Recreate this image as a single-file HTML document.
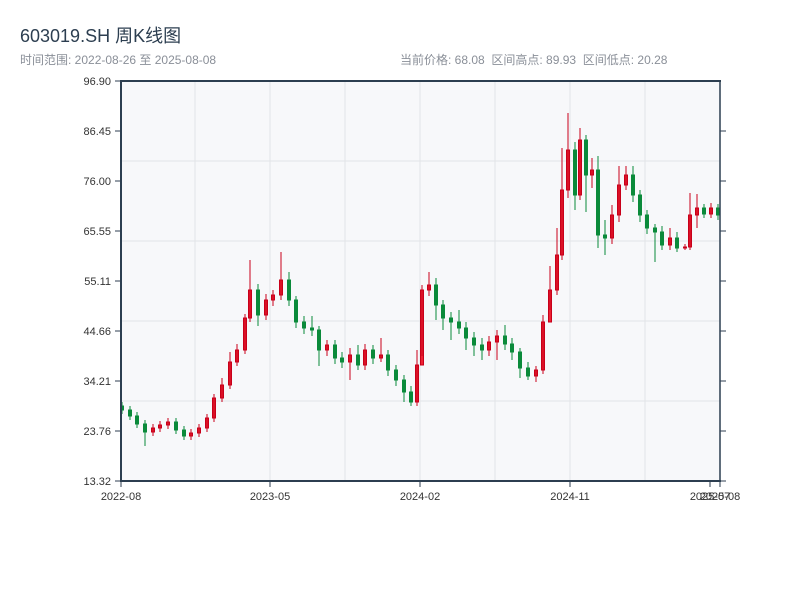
<!DOCTYPE html>
<html><head><meta charset="utf-8"><style>
body{margin:0;background:#fff;width:800px;height:600px;overflow:hidden;font-family:"Liberation Sans","Noto Sans CJK SC",sans-serif}
.t{position:absolute;left:20px;top:22px;font-size:18px;color:#2c3e50}
.s{position:absolute;top:51px;font-size:12px;color:#8a8f98}
svg{position:absolute;left:0;top:0}
.r{stroke:#c8001a;fill:#ee2233;stroke-width:1}
.g{stroke:#0a8a3a;fill:#0a8a3a;stroke-width:1}
.gr{stroke:#e2e4e8;stroke-width:1}
.ax{stroke:#2c3e50}
text{fill:#333;font-size:11px;font-family:"Liberation Sans",sans-serif}
</style></head><body>
<div class="t">603019.SH 周K线图</div>
<div class="s" style="left:20px">时间范围: 2022-08-26 至 2025-08-08</div>
<div class="s" style="left:400px">当前价格: 68.08 &nbsp;区间高点: 89.93 &nbsp;区间低点: 20.28</div>
<svg width="800" height="600">
<rect x="121" y="81" width="599" height="400" fill="#f7f8fa"/>
<path class="gr" d="M121 161H720M121 241H720M121 321H720M121 401H720M195 81V481M270 81V481M345 81V481M420 81V481M495 81V481M570 81V481M645 81V481"/>
<path class="ax" d="M115 81H121M115 131H121M115 181H121M115 231H121M115 281H121M115 331H121M115 381H121M115 431H121M115 481H121M720 131H726M720 181H726M720 231H726M720 281H726M720 331H726M720 381H726M720 431H726M720 481H726M121 481V487M270 481V487M420 481V487M570 481V487M710 481V487M720 481V487"/>
<g text-anchor="end">
<text x="111" y="85">96.90</text><text x="111" y="135">86.45</text><text x="111" y="185">76.00</text><text x="111" y="235">65.55</text><text x="111" y="285">55.11</text><text x="111" y="335">44.66</text><text x="111" y="385">34.21</text><text x="111" y="435">23.76</text><text x="111" y="485">13.32</text>
</g>
<g text-anchor="middle">
<text x="121" y="500">2022-08</text><text x="270" y="500">2023-05</text><text x="420" y="500">2024-02</text><text x="570" y="500">2024-11</text><text x="710" y="500">2025-07</text><text x="720" y="500">2025-08</text>
</g>
<path class="g" d="M122 402V414M120.5 406h3V410h-3z"/>
<path class="g" d="M130 406V420M128.5 410h3V416h-3z"/>
<path class="g" d="M137 412V428M135.5 416h3V424h-3z"/>
<path class="g" d="M145 420V446M143.5 424h3V432h-3z"/>
<path class="r" d="M153 424V436M151.5 428h3V432h-3z"/>
<path class="r" d="M160 421V432M158.5 425h3V428h-3z"/>
<path class="r" d="M168 418V429M166.5 422h3V425h-3z"/>
<path class="g" d="M176 418V434M174.5 422h3V430h-3z"/>
<path class="g" d="M184 426V440M182.5 430h3V436h-3z"/>
<path class="r" d="M191 429V440M189.5 433h3V436h-3z"/>
<path class="r" d="M199 424V437M197.5 428h3V433h-3z"/>
<path class="r" d="M207 414V432M205.5 418h3V428h-3z"/>
<path class="r" d="M214 394V422M212.5 398h3V418h-3z"/>
<path class="r" d="M222 378V402M220.5 385h3V398h-3z"/>
<path class="r" d="M230 352V389M228.5 362h3V385h-3z"/>
<path class="r" d="M237 344V366M235.5 350h3V362h-3z"/>
<path class="r" d="M245 314V354M243.5 318h3V350h-3z"/>
<path class="r" d="M250 260V322M248.5 290h3V318h-3z"/>
<path class="g" d="M258 284V326M256.5 290h3V315h-3z"/>
<path class="r" d="M266 294V320M264.5 300h3V315h-3z"/>
<path class="r" d="M273 290V306M271.5 295h3V300h-3z"/>
<path class="r" d="M281 252V300M279.5 280h3V295h-3z"/>
<path class="g" d="M289 272V306M287.5 280h3V300h-3z"/>
<path class="g" d="M296 296V328M294.5 300h3V322h-3z"/>
<path class="g" d="M304 316V334M302.5 322h3V328h-3z"/>
<path class="g" d="M312 316V336M310.5 328h3V330h-3z"/>
<path class="g" d="M319 326V366M317.5 330h3V350h-3z"/>
<path class="r" d="M327 340V356M325.5 345h3V350h-3z"/>
<path class="g" d="M335 340V364M333.5 345h3V358h-3z"/>
<path class="g" d="M342 352V368M340.5 358h3V362h-3z"/>
<path class="r" d="M350 348V380M348.5 355h3V362h-3z"/>
<path class="g" d="M358 345V370M356.5 355h3V365h-3z"/>
<path class="r" d="M365 344V370M363.5 350h3V365h-3z"/>
<path class="g" d="M373 345V364M371.5 350h3V358h-3z"/>
<path class="r" d="M381 338V362M379.5 355h3V358h-3z"/>
<path class="g" d="M388 350V376M386.5 355h3V370h-3z"/>
<path class="g" d="M396 365V386M394.5 370h3V380h-3z"/>
<path class="g" d="M404 375V402M402.5 380h3V392h-3z"/>
<path class="g" d="M411 386V406M409.5 392h3V402h-3z"/>
<path class="r" d="M417 350V406M415.5 365h3V402h-3z"/>
<path class="r" d="M422 285V356M420.5 290h3V365h-3z"/>
<path class="r" d="M429 272V296M427.5 285h3V290h-3z"/>
<path class="g" d="M436 278V320M434.5 285h3V305h-3z"/>
<path class="g" d="M443 300V330M441.5 305h3V318h-3z"/>
<path class="g" d="M451 312V340M449.5 318h3V322h-3z"/>
<path class="g" d="M459 310V334M457.5 322h3V328h-3z"/>
<path class="g" d="M466 322V350M464.5 328h3V338h-3z"/>
<path class="g" d="M474 332V356M472.5 338h3V345h-3z"/>
<path class="g" d="M482 338V360M480.5 345h3V350h-3z"/>
<path class="r" d="M489 336V356M487.5 342h3V350h-3z"/>
<path class="r" d="M497 330V360M495.5 336h3V342h-3z"/>
<path class="g" d="M505 325V350M503.5 336h3V344h-3z"/>
<path class="g" d="M512 338V360M510.5 344h3V352h-3z"/>
<path class="g" d="M520 348V378M518.5 352h3V368h-3z"/>
<path class="g" d="M528 362V380M526.5 368h3V376h-3z"/>
<path class="r" d="M536 366V382M534.5 370h3V376h-3z"/>
<path class="r" d="M543 315V374M541.5 322h3V370h-3z"/>
<path class="r" d="M550 266V310M548.5 290h3V322h-3z"/>
<path class="r" d="M557 228V295M555.5 255h3V290h-3z"/>
<path class="r" d="M562 148V260M560.5 190h3V255h-3z"/>
<path class="r" d="M568 113V198M566.5 150h3V190h-3z"/>
<path class="g" d="M575 142V210M573.5 150h3V195h-3z"/>
<path class="r" d="M580 128V200M578.5 140h3V195h-3z"/>
<path class="g" d="M586 135V212M584.5 140h3V175h-3z"/>
<path class="r" d="M592 158V188M590.5 170h3V175h-3z"/>
<path class="g" d="M598 156V248M596.5 170h3V235h-3z"/>
<path class="g" d="M605 220V255M603.5 235h3V238h-3z"/>
<path class="r" d="M612 205V244M610.5 215h3V238h-3z"/>
<path class="r" d="M619 166V222M617.5 185h3V215h-3z"/>
<path class="r" d="M626 166V190M624.5 175h3V185h-3z"/>
<path class="g" d="M633 166V202M631.5 175h3V195h-3z"/>
<path class="g" d="M640 190V222M638.5 195h3V215h-3z"/>
<path class="g" d="M647 210V234M645.5 215h3V228h-3z"/>
<path class="g" d="M655 224V262M653.5 228h3V232h-3z"/>
<path class="g" d="M662 226V250M660.5 232h3V245h-3z"/>
<path class="r" d="M670 228V250M668.5 238h3V245h-3z"/>
<path class="g" d="M677 232V252M675.5 238h3V248h-3z"/>
<path class="r" d="M685 244V250M683.5 247h3V248h-3z"/>
<path class="r" d="M690 193V250M688.5 215h3V247h-3z"/>
<path class="r" d="M697 194V228M695.5 208h3V215h-3z"/>
<path class="g" d="M704 204V218M702.5 208h3V214h-3z"/>
<path class="r" d="M711 203V218M709.5 208h3V214h-3z"/>
<path class="g" d="M718 204V220M716.5 208h3V215h-3z"/>
<path class="ax" stroke-width="2" d="M121 80V482M120 481H721M121 81H721"/>
<path class="ax" stroke-width="1.5" d="M720 80V482"/>
</svg>
</body></html>
